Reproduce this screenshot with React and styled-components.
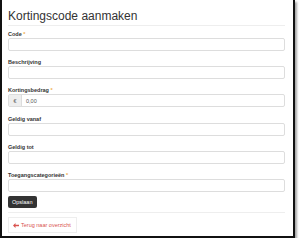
import React from "react";
import styled, { createGlobalStyle } from "styled-components";

const Global = createGlobalStyle`
  body {
    margin: 0;
    background: #fff;
    font-family: "Liberation Sans", Arial, sans-serif;
  }
`;

const Frame = styled.div`
  box-sizing: border-box;
  width: 295px;
  height: 238px;
  border: 2px solid #111;
  border-top: none;
  box-shadow: 2px 2px 2px rgba(0, 0, 0, 0.35);
  background: #fff;
  padding: 8.5px 8px 0 6px;
  overflow: hidden;
`;

const Title = styled.h1`
  margin: 0;
  font-size: 12px;
  font-weight: 400;
  color: #333;
  line-height: 14px;
  padding-bottom: 2.5px;
  border-bottom: 1px solid #eee;
`;

const Form = styled.form`
  display: flex;
  flex-direction: column;
  padding-top: 5px;
`;

const Group = styled.div`
  display: flex;
  flex-direction: column;
  margin-bottom: 8.2px;
`;

const Label = styled.label`
  font-size: 5.5px;
  font-weight: 700;
  color: #333;
  line-height: 7px;
`;

const Req = styled.span`
  color: #f0ad4e;
`;

const Input = styled.div`
  box-sizing: border-box;
  height: 13px;
  border: 1px solid #ddd;
  border-radius: 2px;
  background: #fff;
  display: flex;
  align-items: center;
  font-size: 5.5px;
  color: #555;
`;

const Addon = styled.span`
  width: 12px;
  align-self: stretch;
  display: flex;
  align-items: center;
  justify-content: center;
  background: #eee;
  border-right: 1px solid #ddd;
  color: #666;
`;

const Value = styled.span`
  padding-left: 4px;
`;

const Button = styled.button`
  align-self: flex-start;
  font-family: inherit;
  font-size: 5.5px;
  color: #fff;
  background: #333;
  border: none;
  border-radius: 2px;
  height: 12px;
  padding: 0 4px;
  margin-top: -3.8px;
`;

const Divider = styled.hr`
  align-self: stretch;
  border: none;
  border-top: 1px solid #eee;
  margin: 4px 0 4px;
`;

const BackBox = styled.div`
  align-self: flex-start;
  box-sizing: border-box;
  height: 16px;
  border: 1px solid #eee;
  padding: 0 5px 0 4px;
  display: flex;
  align-items: center;
  gap: 2px;
  font-size: 5.5px;
  color: #d9534f;
`;

const fields = [
  { label: "Code", req: true },
  { label: "Beschrijving" },
  { label: "Kortingsbedrag", req: true, addon: "€", value: "0,00" },
  { label: "Geldig vanaf" },
  { label: "Geldig tot" },
  { label: "Toegangscategorieën", req: true },
];

export default function App() {
  return (
    <>
      <Global />
      <Frame>
        <Title>Kortingscode aanmaken</Title>
        <Form>
          {fields.map((f) => (
            <Group key={f.label}>
              <Label>
                {f.label} {f.req && <Req>*</Req>}
              </Label>
              <Input>
                {f.addon && <Addon>{f.addon}</Addon>}
                {f.value && <Value>{f.value}</Value>}
              </Input>
            </Group>
          ))}
          <Button type="button">Opslaan</Button>
          <Divider />
          <BackBox>
            <svg width="6" height="5" viewBox="0 0 6 5">
              <path d="M0 2.5 L2.5 0 L2.5 1.8 L6 1.8 L6 3.2 L2.5 3.2 L2.5 5 Z" fill="#d9534f" />
            </svg>
            Terug naar overzicht
          </BackBox>
        </Form>
      </Frame>
    </>
  );
}
